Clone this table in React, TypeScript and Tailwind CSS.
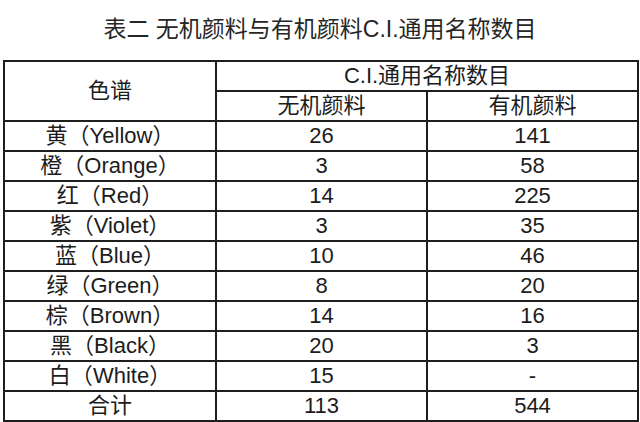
const rows: [string, string, string, string][] = [
  ["黄", "Yellow", "26", "141"],
  ["橙", "Orange", "3", "58"],
  ["红", "Red", "14", "225"],
  ["紫", "Violet", "3", "35"],
  ["蓝", "Blue", "10", "46"],
  ["绿", "Green", "8", "20"],
  ["棕", "Brown", "14", "16"],
  ["黑", "Black", "20", "3"],
  ["白", "White", "15", "-"],
]

const cell = "border-2 border-[#1e1e1e] h-[30px] p-0 text-center align-middle leading-none"

export default function App() {
  return (
    <div
      className="w-[640px] h-[422px] bg-white text-[#1c1c1c] overflow-hidden"
      style={{ fontFamily: '"Liberation Sans", "Noto Sans CJK SC", sans-serif' }}
    >
      <div className="h-[60px] flex items-center justify-center pb-[2px]">
        <h1 className="text-[23px] text-[#262626]">表二 无机颜料与有机颜料C.I.通用名称数目</h1>
      </div>
      <div className="px-[3px]">
        <table className="w-[634px] border-collapse table-fixed text-[22px]">
          <colgroup>
            <col className="w-[212px]" />
            <col className="w-[211px]" />
            <col className="w-[211px]" />
          </colgroup>
          <thead>
            <tr>
              <th rowSpan={2} className={cell + " font-normal"}>色谱</th>
              <th colSpan={2} className={cell + " font-normal"}>C.I.通用名称数目</th>
            </tr>
            <tr>
              <th className={cell + " font-normal"}>无机颜料</th>
              <th className={cell + " font-normal"}>有机颜料</th>
            </tr>
          </thead>
          <tbody>
            {rows.map(([zh, en, a, b]) => (
              <tr key={en}>
                <td className={cell}>
                  {zh}（{en}）
                </td>
                <td className={cell}>{a}</td>
                <td className={cell}>{b}</td>
              </tr>
            ))}
            <tr>
              <td className={cell}>合计</td>
              <td className={cell}>113</td>
              <td className={cell}>544</td>
            </tr>
          </tbody>
        </table>
      </div>
    </div>
  )
}
